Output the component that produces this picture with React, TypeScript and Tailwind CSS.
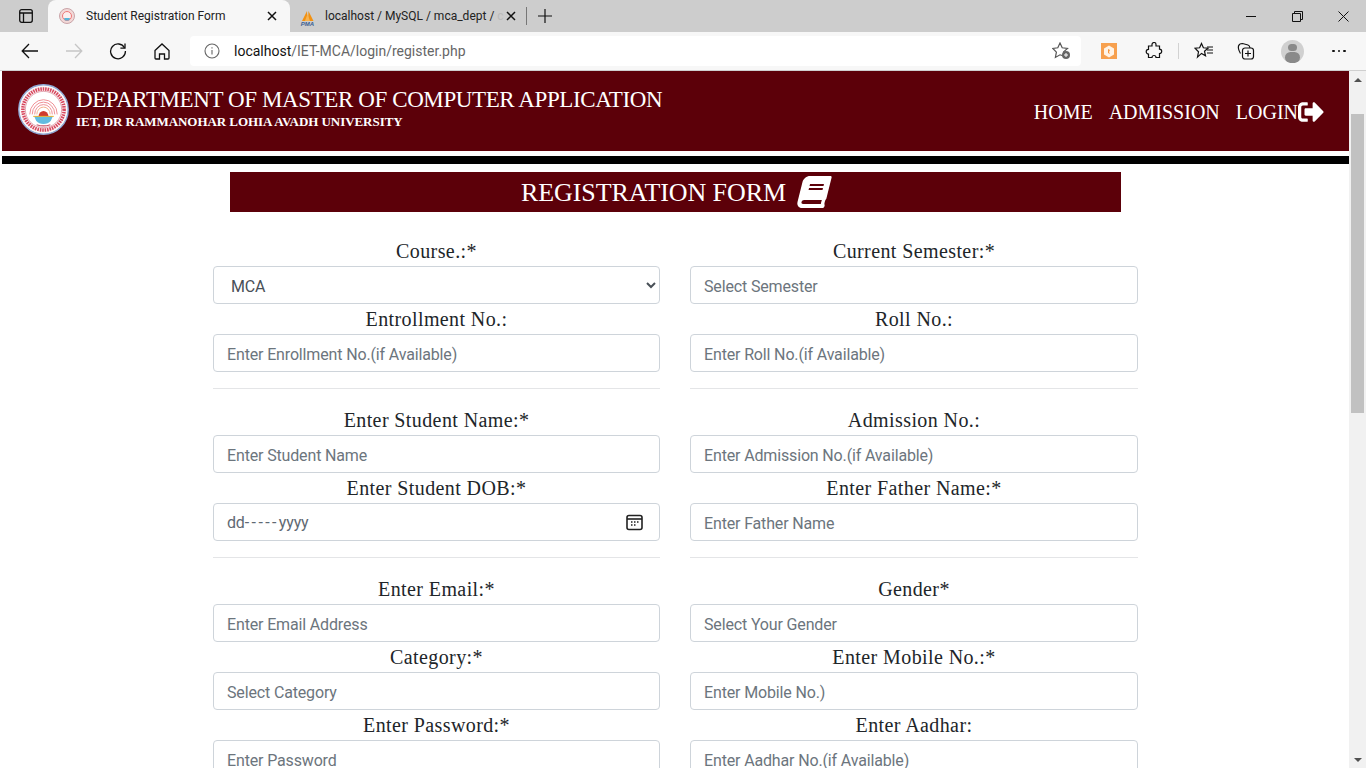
import { FaBook, FaSignOutAlt } from 'react-icons/fa';

const SERIF = "font-['Liberation_Serif',serif]";
const UI = "font-['Roboto',sans-serif]";

type Field = { label: string; placeholder: string; kind?: 'select' | 'date' };

const GROUPS: Field[][][] = [
  [
    [
      { label: 'Course.:*', placeholder: 'MCA', kind: 'select' },
      { label: 'Current Semester:*', placeholder: 'Select Semester' },
    ],
    [
      { label: 'Entrollment No.:', placeholder: 'Enter Enrollment No.(if Available)' },
      { label: 'Roll No.:', placeholder: 'Enter Roll No.(if Available)' },
    ],
  ],
  [
    [
      { label: 'Enter Student Name:*', placeholder: 'Enter Student Name' },
      { label: 'Admission No.:', placeholder: 'Enter Admission No.(if Available)' },
    ],
    [
      { label: 'Enter Student DOB:*', placeholder: 'dd-----yyyy', kind: 'date' },
      { label: 'Enter Father Name:*', placeholder: 'Enter Father Name' },
    ],
  ],
  [
    [
      { label: 'Enter Email:*', placeholder: 'Enter Email Address' },
      { label: 'Gender*', placeholder: 'Select Your Gender' },
    ],
    [
      { label: 'Category:*', placeholder: 'Select Category' },
      { label: 'Enter Mobile No.:*', placeholder: 'Enter Mobile No.)' },
    ],
    [
      { label: 'Enter Password:*', placeholder: 'Enter Password' },
      { label: 'Enter Aadhar:', placeholder: 'Enter Aadhar No.(if Available)' },
    ],
  ],
];

function Logo() {
  return (
    <svg width="51" height="51" viewBox="0 0 52 52" className="shrink-0">
      <circle cx="26" cy="26" r="25.200" fill="#fbf8f8" stroke="#8fa9d6" strokeWidth="1.4" />
      <circle cx="26" cy="26" r="21" fill="none" stroke="#d8485f" strokeWidth="3.600" strokeDasharray="1.6 0.9" />
      <circle cx="26" cy="26" r="18.500" fill="#fff" stroke="#c9566b" strokeWidth="0.5" />
      <path d="M12 31a14 15 0 0 1 28 0" fill="none" stroke="#ef8f95" strokeWidth="1" />
      <path d="M14.500 31a11.500 12.500 0 0 1 23 0" fill="none" stroke="#ef8f95" strokeWidth="1" />
      <path d="M17 31a9 10 0 0 1 18 0" fill="none" stroke="#ef8f95" strokeWidth="1" />
      <path d="M19.200 31a6.800 7.500 0 0 1 13.600 0" fill="none" stroke="#f3b08c" strokeWidth="1" />
      <path d="M21 33a5 5.500 0 0 1 10 0z" fill="#cf3b2e" />
      <path d="M16.500 33h19l-2 4.500a10 10 0 0 1-15 0z" fill="#62bce0" />
      <path d="M15.500 33h21" stroke="#e9b02f" strokeWidth="1" />
      <path d="M19 41.500q7 2.500 14 0" fill="none" stroke="#c9566b" strokeWidth="1.200" />
    </svg>
  );
}

function Input({ field }: { field: Field }) {
  const box = `${UI} h-[38px] w-full rounded-[4px] border border-[#ced4da] bg-white pt-[2px] text-[16px] tracking-[-0.15px] text-[#495057] outline-none`;
  if (field.kind === 'select') {
    return (
      <select defaultValue={field.placeholder} className={`${box} px-[13px]`}>
        <option>MCA</option>
      </select>
    );
  }
  if (field.kind === 'date') {
    return (
      <div className={`${box} flex items-center justify-between pl-[13px] pr-[16px]`}>
        <span className="text-[#5f6973]">
          dd<span className="tracking-[2.4px]">-----</span>yyyy
        </span>
        <svg width="17" height="17" viewBox="0 0 17 17" fill="none" stroke="#222" strokeWidth="1.6" className="-mt-[2px]">
          <rect x="1" y="1.5" width="15" height="14" rx="2" />
          <path d="M1 5h15" />
          <path d="M5 8h1.500M8 8h1.500M11 8h1.500M5 11h1.500M8 11h1.500" strokeWidth="1.6" />
        </svg>
      </div>
    );
  }
  return <input placeholder={field.placeholder} className={`${box} px-[13px] placeholder:text-[#6c757d]`} />;
}

function FieldCell({ field }: { field: Field }) {
  return (
    <div className="flex flex-col">
      <label className={`${SERIF} h-[30px] pt-[2px] text-center text-[20px] leading-[26px] tracking-[0.4px] text-[#212529]`}>
        {field.label}
      </label>
      <Input field={field} />
    </div>
  );
}

function TabBar() {
  return (
    <div className={`${UI} flex h-[32px] shrink-0 items-end bg-[#cdcdcd] pl-[2px] text-[12px]`}>
      <div className="flex h-[32px] w-[46px] items-center justify-center pl-[2px]">
        <svg width="14" height="14" viewBox="0 0 14 14" fill="none" stroke="#111" strokeWidth="1.3">
          <rect x="0.7" y="0.7" width="12.6" height="12.6" rx="2" />
          <path d="M0.7 4h12.6M4.5 4v9" />
        </svg>
      </div>
      <div className="flex h-[32px] w-[242px] items-center rounded-t-lg bg-[#f7f7f7] pl-[11px] pr-[13px]">
        <svg width="16" height="16" viewBox="0 0 16 16" className="shrink-0">
          <circle cx="8" cy="8" r="7.5" fill="#f3d9d8" stroke="#c9a4a8" />
          <circle cx="8" cy="8" r="4.5" fill="#fbeeee" stroke="#e77" />
          <path d="M5 10h6l-1 2.500H6z" fill="#58b5d8" />
        </svg>
        <span className="ml-[11px] flex-1 text-[#222]">Student Registration Form</span>
        <svg width="10" height="10" viewBox="0 0 10 10" stroke="#111" strokeWidth="1.5">
          <path d="M1 1l8 8M9 1l-8 8" />
        </svg>
      </div>
      <div className="flex h-[32px] w-[236px] items-center pl-[9px] pr-[10px]">
        <svg width="17" height="16" viewBox="0 0 17 16" className="mt-[3px] shrink-0">
          <path d="M3 11L8 1l.5 10zM9 11l.5-10 5 10z" fill="#f29111" />
          <path d="M6 11L8.500 4 11 11z" fill="#f7b453" />
          <text x="8.500" y="15.500" textAnchor="middle" fontSize="6" fontWeight="700" fontStyle="italic" fontFamily="Liberation Sans, sans-serif" fill="#3a5f92">
            PMA
          </text>
        </svg>
        <span className="ml-[9px] whitespace-nowrap text-[#222]">
          localhost / MySQL / mca_dept / <span className="text-[#bbb]">c</span>
        </span>
        <svg width="10" height="10" viewBox="0 0 10 10" stroke="#111" strokeWidth="1.5" className="ml-auto">
          <path d="M1 1l8 8M9 1l-8 8" />
        </svg>
      </div>
      <div className="mb-[7px] h-[18px] w-px bg-[#777]" />
      <div className="flex h-[32px] w-[36px] items-center justify-center">
        <svg width="14" height="14" viewBox="0 0 14 14" stroke="#111" strokeWidth="1.2">
          <path d="M7 0v14M0 7h14" />
        </svg>
      </div>
      <div className="ml-auto flex h-[32px] items-center">
        <div className="flex w-[46px] justify-center">
          <svg width="10" height="10" viewBox="0 0 10 10" stroke="#111">
            <path d="M0 5.500h10" />
          </svg>
        </div>
        <div className="flex w-[46px] justify-center">
          <svg width="11" height="11" viewBox="0 0 11 11" fill="none" stroke="#111">
            <path d="M.5 2.500h8v8h-8zM2.500 2.500v-2h8v8h-2" />
          </svg>
        </div>
        <div className="flex w-[46px] justify-center">
          <svg width="11" height="11" viewBox="0 0 11 11" stroke="#111">
            <path d="M.5.5l10 10M10.500.5l-10 10" />
          </svg>
        </div>
      </div>
    </div>
  );
}

function ToolBar() {
  return (
    <div className="flex h-[39px] shrink-0 items-center border-b border-[#cfcfcf] bg-[#f7f7f7] pl-[2px]">
      <div className="flex w-[188px] items-center pl-[19px]">
        <svg width="18" height="16" viewBox="0 0 18 16" fill="none" stroke="#111" strokeWidth="1.3">
          <path d="M17 8H1.500M8 1L1.200 8 8 15" />
        </svg>
        <svg width="18" height="16" viewBox="0 0 18 16" fill="none" stroke="#c6c6c6" strokeWidth="1.3" className="ml-[26px]">
          <path d="M1 8h15.500M10 1l6.800 7L10 15" />
        </svg>
        <svg width="18" height="18" viewBox="0 0 18 18" fill="none" stroke="#111" strokeWidth="1.3" className="ml-[26px]">
          <path d="M15.600 6A7.400 7.400 0 1 0 16.400 9" />
          <path d="M16 1.500V6.200h-4.600" />
        </svg>
        <svg width="16" height="17" viewBox="0 0 16 17" fill="none" stroke="#111" strokeWidth="1.3" className="ml-[27px]">
          <path d="M1 7.500L8 1l7 6.500V15a1 1 0 0 1-1 1h-3.500v-5h-5v5H2a1 1 0 0 1-1-1z" />
        </svg>
      </div>
      <div className={`${UI} flex h-[30px] w-[891px] items-center rounded-[4px] bg-white pl-[14px] pr-[10px] text-[14px]`}>
        <svg width="16" height="16" viewBox="0 0 16 16" fill="none" stroke="#666" strokeWidth="1.1">
          <circle cx="8" cy="8" r="7" />
          <path d="M8 7v4.500M8 4.200v1.200" />
        </svg>
        <span className="ml-[14px] text-[#111]">localhost</span>
        <span className="text-[#666]">/IET-MCA/login/register.php</span>
        <svg width="19" height="18" viewBox="0 0 19 18" fill="none" stroke="#555" strokeWidth="1.2" className="ml-auto">
          <path d="M8 1l2.200 4.800 5.300.6-3.900 3.500 1 4.500L8 12.800 3.400 15.400l1-5.200L.8 6.400l5-.6z" />
          <circle cx="14" cy="13" r="4" fill="#666" stroke="none" />
          <path d="M14 11v4M12 13h4" stroke="#fff" strokeWidth="1" />
        </svg>
      </div>
      <div className="flex flex-1 items-center">
        <div className="ml-[20px] flex h-[16px] w-[16px] items-center justify-center bg-[#f7a04e]">
          <svg width="12" height="13" viewBox="0 0 12 13">
            <path d="M6 .5l5 3v6l-5 3-5-3v-6z" fill="#fff3e6" />
            <path d="M5 4l2 1-1 2 1 2-2-1z" fill="#f5953d" />
          </svg>
        </div>
        <svg width="18" height="18" viewBox="0 0 18 18" fill="none" stroke="#111" strokeWidth="1.2" className="ml-[28px]">
          <path d="M7 2.500a2 2 0 0 1 4 0V4h3.500v3.200a2.200 2.200 0 0 1 0 4.400V15.500H11a2 2 0 0 0-4 0H3.500V12a2.300 2.300 0 0 1 0-4.600V4H7z" />
        </svg>
        <div className="ml-[15px] h-[16px] w-px bg-[#d2d2d2]" />
        <svg width="20" height="18" viewBox="0 0 20 18" fill="none" stroke="#111" strokeWidth="1.2" className="ml-[15px]">
          <path d="M7.500 1.500l1.900 4.300 4.600.4-3.500 3 1 4.600-4-2.400-4 3.700 1-5.300L1 6.200l4.600-.4z" />
          <path d="M13 8h6M13 11h6M13 5h6" />
        </svg>
        <svg width="18" height="18" viewBox="0 0 18 18" fill="none" stroke="#111" strokeWidth="1.2" className="ml-[23px]">
          <rect x="5.500" y="6" width="11" height="11" rx="2.500" />
          <path d="M11 8.500v6M8 11.500h6M3.500 11.500C2 9 1 6 1.500 4c.4-1.800 2-2.500 4-2.500L11 3c1.200.4 1.800 1.500 2 3" />
        </svg>
        <div className="ml-[26px] flex h-[23px] w-[23px] flex-col items-center overflow-hidden rounded-full bg-[#d0d0d0]">
          <div className="mt-[4px] h-[9px] w-[9px] rounded-full bg-[#8a8a8a]" />
          <div className="mt-[1px] h-[12px] w-[15px] rounded-full bg-[#8a8a8a]" />
        </div>
        <div className="ml-[28px] flex gap-[3px]">
          <div className="h-[2.500px] w-[2.500px] rounded-full bg-[#111]" />
          <div className="h-[2.500px] w-[2.500px] rounded-full bg-[#111]" />
          <div className="h-[2.500px] w-[2.500px] rounded-full bg-[#111]" />
        </div>
      </div>
    </div>
  );
}

function Scrollbar() {
  return (
    <div className="flex w-[17px] shrink-0 flex-col items-center bg-[#f1f1f1]">
      <div className="mt-[7px] h-0 w-0 border-x-[4px] border-b-[4px] border-x-transparent border-b-[#505050]" />
      <div className="mt-[32px] h-[299px] w-[13px] bg-[#c1c1c1]" />
      <div className="mt-auto mb-[6px] h-0 w-0 border-x-[4px] border-t-[4px] border-x-transparent border-t-[#505050]" />
    </div>
  );
}

export default function App() {
  return (
    <div className="flex h-[768px] w-[1366px] flex-col overflow-hidden bg-white">
      <TabBar />
      <ToolBar />
      <div className="flex min-h-0 flex-1 pl-[2px]">
        <main className={`${SERIF} min-w-0 flex-1 overflow-hidden`}>
          <header className="flex h-[80px] items-center justify-between bg-[#5c0009] pl-[16px] pr-[25px] text-white">
            <div className="mb-[3px] flex items-center gap-[7px]">
              <Logo />
              <div className="mb-[4px]">
                <div className="text-[23px] leading-[28px] tracking-[-0.4px]">DEPARTMENT OF MASTER OF COMPUTER APPLICATION</div>
                <div className="text-[13px] font-bold leading-[16px] tracking-[-0.05px]">IET, DR RAMMANOHAR LOHIA AVADH UNIVERSITY</div>
              </div>
            </div>
            <nav className="mt-[2px] flex items-center gap-[16px] text-[20px]">
              <span>HOME</span>
              <span>ADMISSION</span>
              <span className="flex items-center">
                LOGIN
                <FaSignOutAlt className="text-[26px]" />
              </span>
            </nav>
          </header>
          <div className="mt-[5px] h-[8px] bg-black" />
          <div className="mx-auto mt-[8px] w-[925px]">
            <div className="mx-auto flex h-[40px] w-[891px] items-center justify-center gap-[12px] bg-[#5c0009] text-[26px] tracking-[-0.1px] text-white">
              <span>REGISTRATION FORM</span>
              <FaBook className="-skew-x-[14deg] text-[32px]" />
            </div>
            <div className="mt-[24px]">
              {GROUPS.map((group, i) => (
                <section key={i}>
                  <div className="grid grid-cols-[447px_448px] gap-x-[30px]">
                    {group.flat().map((field) => (
                      <FieldCell key={field.label} field={field} />
                    ))}
                  </div>
                  {i < GROUPS.length - 1 && (
                    <div className="mb-[16px] mt-[16px] grid grid-cols-[447px_448px] gap-x-[30px]">
                      <hr className="border-[#e4e5e7]" />
                      <hr className="border-[#e4e5e7]" />
                    </div>
                  )}
                </section>
              ))}
            </div>
          </div>
        </main>
        <Scrollbar />
      </div>
    </div>
  );
}
